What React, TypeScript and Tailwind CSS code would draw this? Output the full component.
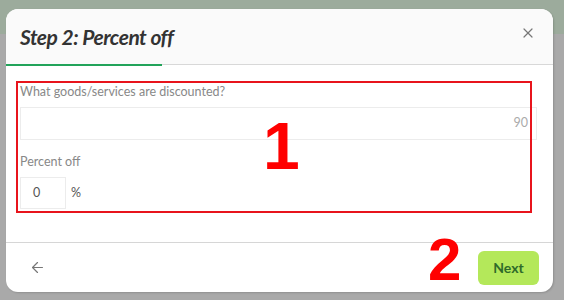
import { X, ArrowLeft } from 'lucide-react';

export default function App() {
    return (
        <div className="relative w-[564px] h-[300px] overflow-hidden bg-[linear-gradient(to_bottom,#9cab9c_0px,#9cab9c_34px,#a9a9a9_34px)] pt-[9px] pl-[6px]" style={{ fontFamily: 'Lato, "Noto Sans", sans-serif' }}>
            <div className="w-[547px] h-[283px] rounded-[12px] overflow-hidden bg-white flex flex-col shadow-[1px_1px_2px_rgba(0,0,0,0.15)]">
                <div className="h-[55px] bg-[#fafafa] flex items-center justify-between pl-[14px] pr-[17px]">
                    <h2 className="text-[21px] font-bold italic text-[#333] tracking-[-0.5px]">Step 2: Percent off</h2>
                    <X size={16} strokeWidth={1.8} className="text-[#777] -mt-[8px]" />
                </div>
                <div className="h-[3px] bg-white flex flex-col">
                    <div className="flex h-[2px]">
                        <div className="w-[156px] bg-[#22a35a]" />
                        <div className="flex-1 bg-[#d8d8d8] h-[1px]" />
                    </div>
                </div>

                <div className="relative flex-1 px-[14px] pt-[17px]">
                    <div className="text-[12.5px] text-[#888] leading-[16px]">What goods/services are discounted?</div>
                    <div className="mt-[7px] h-[33px] border border-[#ececec] flex items-center justify-end pr-[8px] mr-[2px]">
                        <span className="text-[12.5px] text-[#aaa]">90</span>
                    </div>
                    <div className="mt-[14px] text-[12.5px] text-[#888] leading-[16px]">Percent off</div>
                    <div className="mt-[7px] flex items-center gap-[5px]">
                        <div className="w-[46px] h-[32px] border border-[#ececec] flex items-center pl-[12px] text-[12.5px] text-[#555]">0</div>
                        <span className="text-[12.5px] text-[#555]">%</span>
                    </div>

                    <div className="absolute left-[10px] top-[14px] w-[516px] h-[132px] border-2 border-[#e8141c]" />
                    <div className="absolute left-[257px] top-[46px] text-[66px] leading-none font-bold text-[#f00] tracking-tight" style={{ fontFamily: '"Liberation Sans", Arial, sans-serif' }}>1</div>
                </div>

                <div className="relative h-[50px] border-t border-[#d6d6d6] flex items-center justify-between pl-[23px] pr-[14px]">
                    <ArrowLeft size={17} strokeWidth={1.7} className="text-[#777]" />
                    <div className="absolute left-[422px] top-[-13px] text-[60px] leading-none font-bold text-[#f00]" style={{ fontFamily: '"Liberation Sans", Arial, sans-serif' }}>2</div>
                    <button className="w-[61px] h-[34px] rounded-[6px] bg-[#b4e85a] text-[#2f6b2a] text-[14px] font-bold">Next</button>
                </div>
            </div>
        </div>
    );
}
